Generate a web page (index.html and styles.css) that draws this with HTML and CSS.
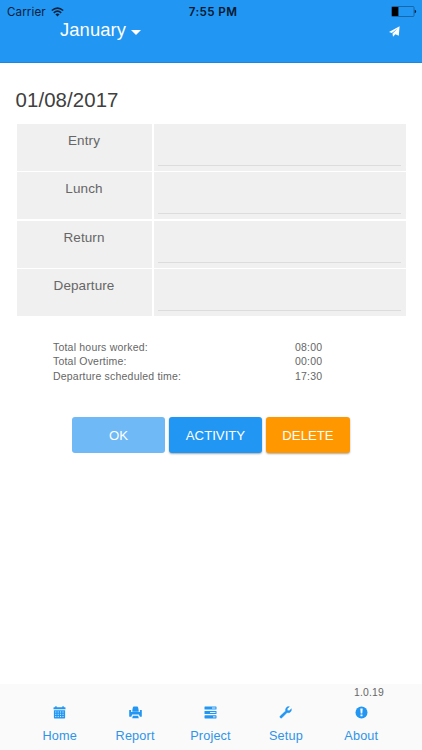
FILE: index.html
```html
<!DOCTYPE html>
<html lang="en">
<head>
<meta charset="utf-8">
<title>Timesheet</title>
<link rel="stylesheet" href="styles.css">
</head>
<body>
<div class="app">
  <header class="header">
    <div class="status">
      <div class="carrier"><span>Carrier</span>
        <svg width="13" height="10" viewBox="0 0 13 10" fill="none" stroke="#08203a" stroke-width="1.6"><path d="M.8 3.5Q6.5-1.3 12.2 3.5M2.8 5.8Q6.5 2.6 10.2 5.8"/><path d="M4.4 7.3Q6.5 5.7 8.6 7.3L6.5 9.5Z" fill="#08203a" stroke="none"/></svg>
      </div>
      <div class="clock">7:55 PM</div>
      <svg class="battery" width="26" height="11" viewBox="0 0 26 11"><rect x=".5" y=".5" width="22.5" height="10" rx="1" fill="none" stroke="#145b98" stroke-width=".8"/><path d="M1 1h6.4v9H1z" fill="#000"/><path d="M23.7 3.8q1.4.2 1.4 1.7t-1.4 1.7z" fill="#08203a"/></svg>
    </div>
    <div class="toolbar">
      <div class="month"><span>January</span><i class="caret"></i></div>
      <svg width="11" height="11" viewBox="0 0 11 11" fill="#fff"><path d="M10.6.3 9.8 9.7 6.4 8.3 4 10.7 3.5 7.5 9 2.3 2.8 7.1 0 6Z"/></svg>
    </div>
  </header>
  <main class="main">
    <h1 class="date">01/08/2017</h1>
    <div class="entries">
      <div class="label">Entry</div><div class="field"><div class="line"></div></div>
      <div class="label">Lunch</div><div class="field"><div class="line"></div></div>
      <div class="label">Return</div><div class="field"><div class="line"></div></div>
      <div class="label">Departure</div><div class="field"><div class="line"></div></div>
    </div>
    <div class="totals">
      <span>Total hours worked:</span><span>08:00</span>
      <span>Total Overtime:</span><span>00:00</span>
      <span>Departure scheduled time:</span><span>17:30</span>
    </div>
    <div class="buttons">
      <button class="btn ok">OK</button>
      <button class="btn activity">ACTIVITY</button>
      <button class="btn delete">DELETE</button>
    </div>
  </main>
  <footer class="footer">
    <div class="version">1.0.19</div>
    <nav class="nav">
      <a class="tab"><svg width="13" height="13" viewBox="0 0 13 13"><path d="M1 1.2h1.2V.3h1.5v.9h5.6V.3h1.5v.9H12q.5 0 .5.5v1.5H.5V1.7q0-.5.5-.5zM.9 4.2h11.2v7.5q0 .7-.7.7H1.6q-.7 0-.7-.7z"/><path d="M2.3 6h8.6M2.3 8.3h8.6M2.3 10.6h8.6" stroke="#fafafa" stroke-width="1" stroke-dasharray="1 1.4"/></svg>Home</a>
      <a class="tab"><svg width="13" height="13" viewBox="0 0 13 13"><path d="M4.6.4h3.8q1 .5 1.3 4.4v1H3.3v-1Q3.6.9 4.6.4zM.2 4.1h1.9v2h8.8v-2h1.9v6.1q0 .6-.6.6h-1.2L9.8 8.4H3.2l-.9 2.4H.8q-.6 0-.6-.6zM3.9 9.7h5.2l.7 2.6H3.2z"/></svg>Report</a>
      <a class="tab"><svg width="13" height="13" viewBox="0 0 13 13"><rect x=".5" y=".5" width="12" height="3.1" rx=".6"/><rect x=".5" y="4.9" width="12" height="3.1" rx=".6"/><rect x=".5" y="9.3" width="12" height="3.1" rx=".6"/><path d="M8 2h3.5M6 6.5h5.5M9 10.9h2.5" stroke="#fafafa" stroke-width=".9"/></svg>Project</a>
      <a class="tab"><svg width="13" height="13" viewBox="0 0 13 13"><path d="M10.4.7 8.2 2.8l.3 1.7 1.7.3 2.2-2.1q.4 2-1 3.2-1.5 1.3-3.3.7l-5.2 5.2q-.7.7-1.6 0-.9-1-.1-1.8L6.6 5Q6.1 3 7.3 1.7 8.6.3 10.4.7z" stroke="#2196f3" stroke-width=".4"/></svg>Setup</a>
      <a class="tab"><svg width="13" height="13" viewBox="0 0 13 13"><circle cx="6.5" cy="6.5" r="6"/><path d="M5.3 2.5h2.4l-.4 4.9H5.7zM5.5 8.4h2v1.8h-2z" fill="#fafafa"/></svg>About</a>
    </nav>
  </footer>
</div>
</body>
</html>
```
FILE: styles.css
```css
* { box-sizing: border-box; }
body {
  margin: 0;
  background: #fff;
  color: #666;
  font-family: "Liberation Sans", Arial, sans-serif;
}
svg { display: block; }
.app { display: flex; flex-direction: column; height: 750px; }
.header {
  height: 63px;
  background: #2196f3;
  border-bottom: 1px solid #1c87df;
}
.status {
  display: grid;
  grid-template-columns: 1fr auto 1fr;
  align-items: center;
  height: 20px;
  padding: 2px 5px 0 7px;
  color: #08203a;
  font: 400 11.6px/18px Inter, sans-serif;
}
.carrier { display: flex; align-items: center; gap: 5px; letter-spacing: .1px; }
.carrier span, .clock { padding-top: 1px; }
.clock { padding-left: 2px; font-weight: 600; letter-spacing: .4px; color: #04182e; }
.battery { justify-self: end; }
.toolbar {
  display: flex;
  justify-content: space-between;
  align-items: center;
  height: 20px;
  padding: 0 22px 0 60px;
}
.toolbar svg { margin-top: 3px; }
.month {
  display: flex;
  align-items: center;
  gap: 5px;
  color: #fff;
  font-size: 18.4px;
  line-height: 20px;
  letter-spacing: .1px;
}
.caret {
  border: 5px solid transparent;
  border-top-color: #fff;
  border-bottom: 0;
  margin-top: 4px;
}
.main { flex: 1; }
.date {
  margin: 25px 0 0 15.5px;
  color: #404040;
  font-size: 20.4px;
  font-weight: 400;
  line-height: 24px;
  letter-spacing: .1px;
}
.entries {
  display: grid;
  grid-template-columns: 135px 252px;
  grid-auto-rows: 46.75px;
  gap: 1.7px 2px;
  margin: 12px 0 0 16.5px;
}
.label, .field { background: #f0f0f0; }
.label {
  padding-top: 8px;
  text-align: center;
  font-size: 13.5px;
  line-height: 17px;
  letter-spacing: .1px;
}
.field { display: flex; align-items: flex-end; padding: 0 5px 5px 4px; }
.line { flex: 1; height: 1px; background: #dcdcdc; }
.totals {
  display: grid;
  grid-template-columns: 242px auto;
  justify-content: start;
  margin: 24px 0 0 53px;
  font-size: 10.5px;
  line-height: 14.3px;
  letter-spacing: .2px;
}
.buttons { display: flex; gap: 4px; margin: 34px 0 0 72px; }
.btn {
  width: 93px;
  height: 36.5px;
  padding: 1px 0 0;
  border: 0;
  border-radius: 3px;
  color: #fff;
  font: 13.2px/36px "Liberation Sans", Arial, sans-serif;
  box-shadow: 0 1px 2px rgba(0, 0, 0, .35);
}
.ok { background: #6fb9f7; box-shadow: none; }
.activity { background: #2196f3; }
.delete { width: 84px; background: #ff9800; }
.footer { height: 66px; background: #fafafa; }
.version {
  padding: 2px 38px 0 0;
  text-align: right;
  font-size: 10.4px;
  line-height: 14px;
  letter-spacing: .2px;
}
.nav {
  display: grid;
  grid-template-columns: repeat(5, 1fr);
  padding: 6px 23px 0 22px;
}
.tab {
  display: flex;
  flex-direction: column;
  align-items: center;
  gap: 9px;
  color: #2f94e8;
  font-size: 12.7px;
  line-height: 16px;
  letter-spacing: .15px;
}
.tab svg { fill: #2196f3; }
```
